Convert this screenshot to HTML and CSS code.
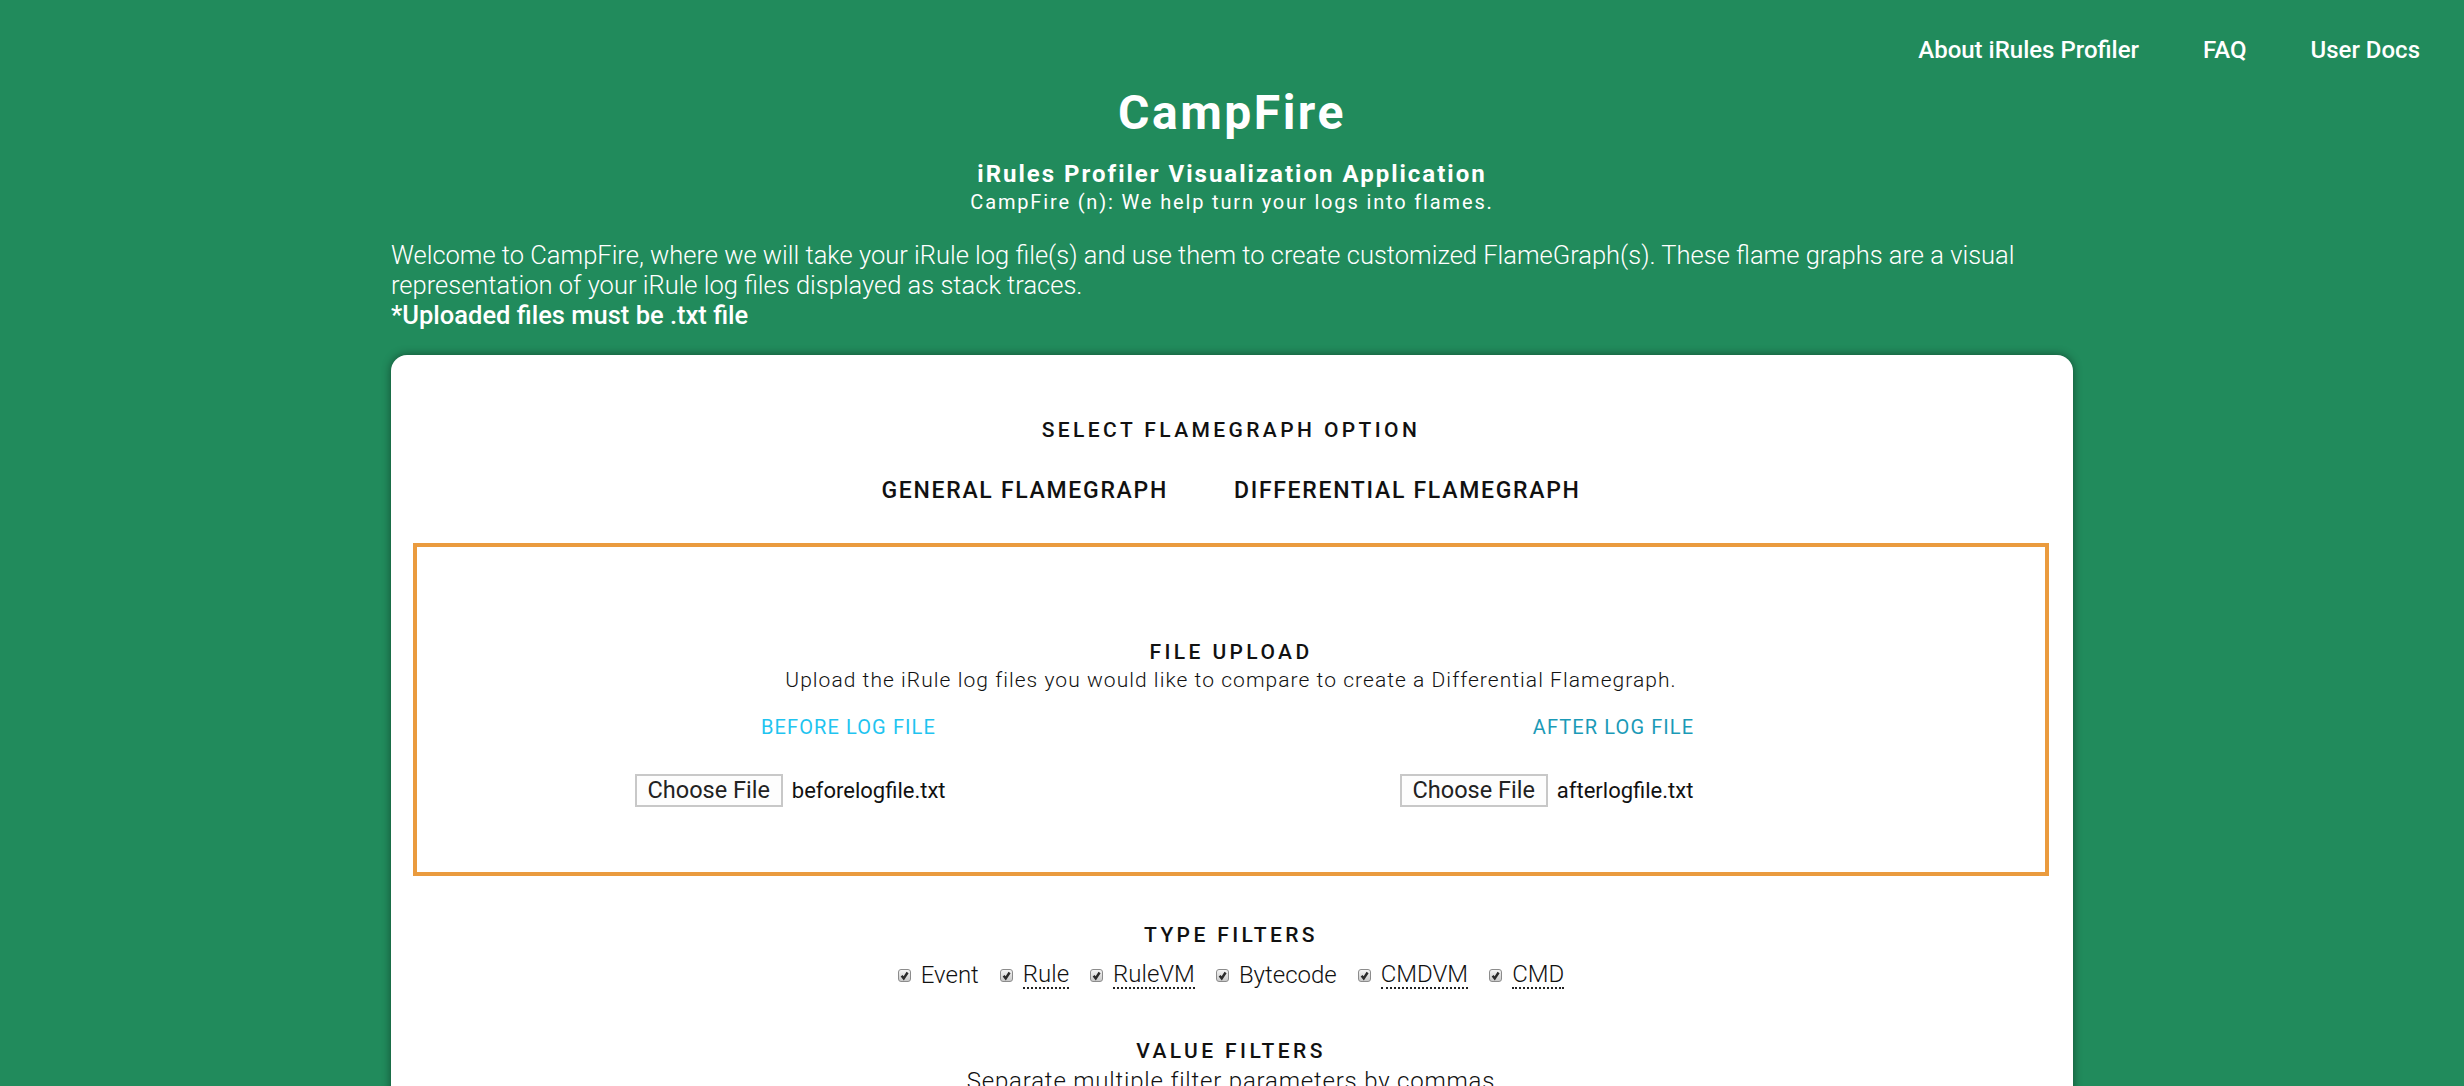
FILE: index.html
```html
<!DOCTYPE html>
<html lang="en">
<head>
<meta charset="utf-8">
<title>CampFire - iRules Profiler</title>
<link rel="stylesheet" href="styles.css">
</head>
<body>
<nav class="topnav">
  <a href="#">About iRules Profiler</a>
  <a href="#">FAQ</a>
  <a href="#">User Docs</a>
</nav>
<header class="hero">
  <h1 class="hero-title">CampFire</h1>
  <h2 class="hero-sub">iRules Profiler Visualization Application</h2>
  <p class="hero-tag">CampFire (n): We help turn your logs into flames.</p>
</header>
<main class="container">
  <p class="intro">Welcome to CampFire, where we will take your iRule log file(s) and use them to create customized FlameGraph(s). These flame graphs are a visual representation of your iRule log files displayed as stack traces.<br><strong class="intro-note">*Uploaded files must be .txt file</strong></p>
  <section class="card">
    <h3 class="section-title">SELECT FLAMEGRAPH OPTION</h3>
    <div class="tabs">
      <button class="tab">GENERAL FLAMEGRAPH</button>
      <button class="tab">DIFFERENTIAL FLAMEGRAPH</button>
    </div>
    <div class="upload-box">
      <h3 class="section-title upload-title">FILE UPLOAD</h3>
      <p class="upload-desc">Upload the iRule log files you would like to compare to create a Differential Flamegraph.</p>
      <div class="upload-cols">
        <div class="upload-col">
          <span class="file-label before">BEFORE LOG FILE</span>
          <div class="file-input"><span class="file-btn">Choose File</span><span class="file-name">beforelogfile.txt</span></div>
        </div>
        <div class="upload-col">
          <span class="file-label after">AFTER LOG FILE</span>
          <div class="file-input"><span class="file-btn">Choose File</span><span class="file-name">afterlogfile.txt</span></div>
        </div>
      </div>
    </div>
    <h3 class="section-title filters-title">TYPE FILTERS</h3>
    <div class="checks">
      <label class="check"><span class="box"><svg viewBox="0 0 10 10"><path d="M2.4 5.3 L4.3 7.7 L7.8 2.3" /></svg></span>Event</label>
      <label class="check"><span class="box"><svg viewBox="0 0 10 10"><path d="M2.4 5.3 L4.3 7.7 L7.8 2.3" /></svg></span><abbr title="Rule">Rule</abbr></label>
      <label class="check"><span class="box"><svg viewBox="0 0 10 10"><path d="M2.4 5.3 L4.3 7.7 L7.8 2.3" /></svg></span><abbr title="Rule VM">RuleVM</abbr></label>
      <label class="check"><span class="box"><svg viewBox="0 0 10 10"><path d="M2.4 5.3 L4.3 7.7 L7.8 2.3" /></svg></span>Bytecode</label>
      <label class="check"><span class="box"><svg viewBox="0 0 10 10"><path d="M2.4 5.3 L4.3 7.7 L7.8 2.3" /></svg></span><abbr title="Command VM">CMDVM</abbr></label>
      <label class="check"><span class="box"><svg viewBox="0 0 10 10"><path d="M2.4 5.3 L4.3 7.7 L7.8 2.3" /></svg></span><abbr title="Command">CMD</abbr></label>
    </div>
    <h3 class="section-title value-title">VALUE FILTERS</h3>
    <p class="value-desc">Separate multiple filter parameters by commas</p>
    <div class="value-inputs">
      <input class="value-field" type="text" placeholder="Filter values">
    </div>
  </section>
</main>
</body>
</html>
```

FILE: styles.css
```css
html, body {
  margin: 0;
  padding: 0;
}
body {
  background: #218b5c;
  font-family: Roboto, "Liberation Sans", sans-serif;
  color: #ffffff;
}
.topnav {
  display: flex;
  justify-content: flex-end;
  gap: 64px;
  padding: 36px 44px 0 0;
  font-size: 24px;
  line-height: 28px;
  font-weight: 500;
}
.topnav a {
  color: #ffffff;
  text-decoration: none;
}
.hero {
  text-align: center;
}
.hero-title {
  margin: 21px 0 0;
  font-size: 48px;
  line-height: 56px;
  font-weight: 700;
  letter-spacing: 2.5px;
}
.hero-sub {
  margin: 18.5px 0 0;
  font-size: 24px;
  line-height: 28px;
  font-weight: 700;
  letter-spacing: 2px;
}
.hero-tag {
  margin: 2px 0 0;
  font-size: 20px;
  line-height: 24px;
  font-weight: 400;
  letter-spacing: 1.85px;
}
.container {
  width: 1682px;
  margin: 0 auto;
}
.intro {
  margin: 26.5px 0 0;
  font-size: 25.5px;
  line-height: 30px;
  font-weight: 300;
}
.intro-note {
  font-weight: 500;
}
.card {
  margin-top: 25px;
  background: #ffffff;
  border-radius: 16px;
  box-shadow: 0 0 10px rgba(0, 0, 0, 0.45);
  padding: 63px 24px 80px 22px;
  color: #111111;
  text-align: center;
}
.section-title {
  margin: 0;
  font-size: 21px;
  line-height: 25px;
  font-weight: 500;
  letter-spacing: 3.4px;
}
.tabs {
  display: flex;
  justify-content: center;
  gap: 66px;
  margin-top: 34px;
}
.tab {
  border: 0;
  background: none;
  padding: 0;
  font-family: inherit;
  font-size: 23px;
  line-height: 27px;
  font-weight: 500;
  letter-spacing: 1.7px;
  color: #111111;
}
.upload-box {
  margin-top: 39px;
  border: 4px solid #ea9b3e;
  padding: 93px 49px 65px;
}
.upload-desc {
  margin: 3px 0 0;
  font-size: 21px;
  line-height: 24px;
  font-weight: 300;
  letter-spacing: 1.05px;
}
.upload-cols {
  display: grid;
  grid-template-columns: 1fr 1fr;
  margin-top: 23px;
}
.upload-col {
  display: flex;
  flex-direction: column;
  align-items: center;
  gap: 35px;
}
.file-label {
  font-size: 20px;
  line-height: 24px;
  font-weight: 400;
  letter-spacing: 1.1px;
}
.file-label.before {
  color: #1fc4f0;
}
.file-label.after {
  color: #1b9ab7;
}
.file-input {
  display: flex;
  align-items: center;
  gap: 9px;
  width: 428px;
}
.file-btn {
  box-sizing: border-box;
  height: 33px;
  padding: 0 11px;
  border: 2px solid #c8c8c8;
  background: #fdfdfd;
  font-size: 23.5px;
  line-height: 29px;
  color: #222222;
}
.file-name {
  font-size: 22px;
  color: #111111;
}
.filters-title {
  margin-top: 47px;
}
.checks {
  display: flex;
  justify-content: center;
  gap: 21px;
  margin-top: 13px;
  font-size: 24px;
  line-height: 28px;
  font-weight: 300;
}
.check {
  display: flex;
  align-items: center;
  gap: 10px;
}
.box {
  box-sizing: border-box;
  width: 13px;
  height: 13px;
  border: 1px solid #8c8c8c;
  border-radius: 3px;
  background: linear-gradient(#f4f4f4, #c9c9c9);
  display: flex;
  align-items: center;
  justify-content: center;
}
.box svg {
  width: 11px;
  height: 11px;
  fill: none;
  stroke: #2a2a2a;
  stroke-width: 2.2;
}
.check abbr {
  text-decoration: none;
  border-bottom: 2px dotted #222222;
  line-height: 26px;
}
.value-title {
  margin-top: 50px;
}
.value-desc {
  margin: 4px 0 0;
  font-size: 24px;
  line-height: 26px;
  font-weight: 300;
  letter-spacing: 0.8px;
}
.value-inputs {
  margin-top: 20px;
}
.value-field {
  width: 600px;
  height: 36px;
  font-size: 20px;
}
```
